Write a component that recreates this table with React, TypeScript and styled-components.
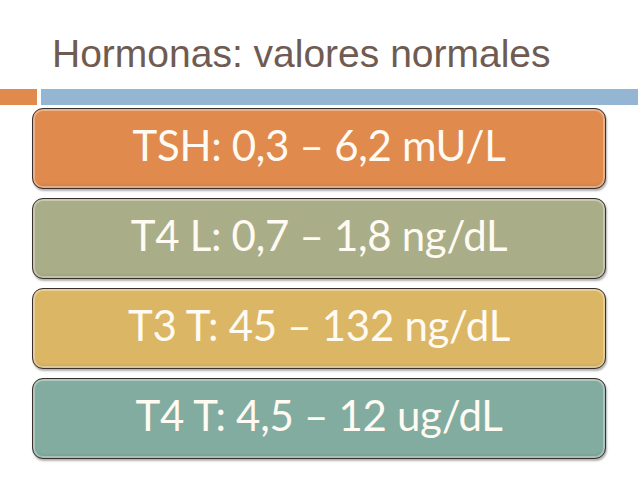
import React from "react";
import styled, { createGlobalStyle } from "styled-components";

const Global = createGlobalStyle`
  html, body { margin: 0; padding: 0; background: #ffffff; }
  #root { width: 638px; height: 479px; overflow: hidden; }
`;

const Slide = styled.div`
  width: 638px;
  height: 479px;
  background: #ffffff;
  display: flex;
  flex-direction: column;
`;

const Title = styled.h1`
  margin: 31px 0 0 52px;
  font-family: "Liberation Sans", Arial, sans-serif;
  font-weight: 400;
  font-size: 39px;
  line-height: 46px;
  color: #6f5b51;
  white-space: nowrap;
`;

const Rule = styled.div`
  margin-top: 12px;
  height: 16px;
  display: flex;
  gap: 4px;
`;

const RuleBlock = styled.div<{ $color: string; $width?: number }>`
  background: ${(p) => p.$color};
  ${(p) => (p.$width ? `width: ${p.$width}px; flex: none;` : "flex: 1;")}
`;

const List = styled.div`
  margin: 3px 32px 0 32px;
  display: flex;
  flex-direction: column;
  gap: 9px;
`;

const Item = styled.div<{ $bg: string }>`
  box-sizing: border-box;
  height: 81px;
  border-radius: 11px;
  border: 1.5px solid #3b302b;
  background: ${(p) => p.$bg};
  box-shadow: inset 0 0 0 2px rgba(255, 255, 255, 0.35),
    inset 0 -3px 3px rgba(0, 0, 0, 0.08), 1px 2px 2px rgba(0, 0, 0, 0.3);
  display: flex;
  align-items: center;
  justify-content: center;
  font-family: Lato, "Open Sans", sans-serif;
  font-size: 42px;
  letter-spacing: -0.3px;
  color: #fffaf2;
  white-space: nowrap;
  padding-bottom: 8px;
`;

const items = [
  { text: "TSH: 0,3 – 6,2 mU/L", bg: "#e08a4e" },
  { text: "T4 L: 0,7 – 1,8 ng/dL", bg: "#a9ae88" },
  { text: "T3 T: 45 – 132 ng/dL", bg: "#dbb665" },
  { text: "T4 T: 4,5 – 12 ug/dL", bg: "#81ac9f" },
];

export default function App() {
  return (
    <Slide>
      <Global />
      <Title>Hormonas: valores normales</Title>
      <Rule>
        <RuleBlock $color="#e08a4e" $width={37} />
        <RuleBlock $color="#94b6d3" />
      </Rule>
      <List>
        {items.map((it) => (
          <Item key={it.text} $bg={it.bg}>
            {it.text}
          </Item>
        ))}
      </List>
    </Slide>
  );
}
